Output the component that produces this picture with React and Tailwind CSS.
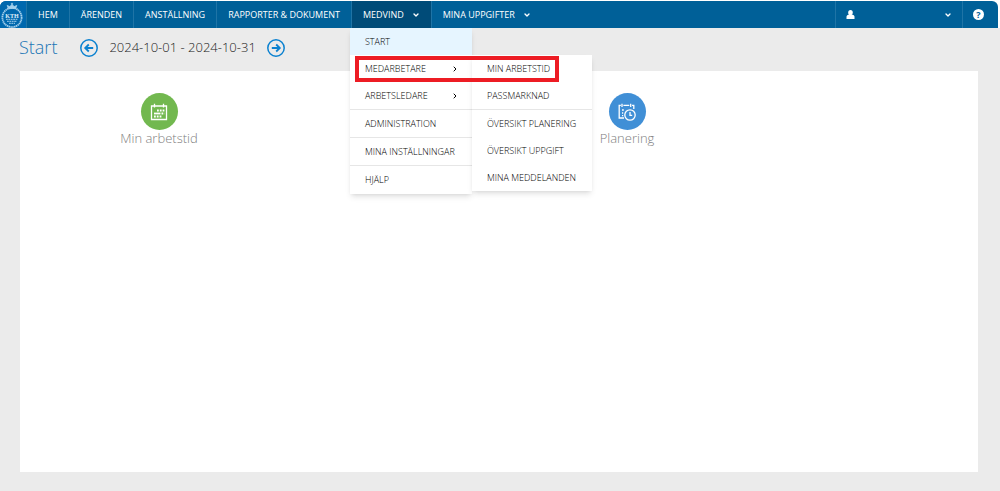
import React from 'react';
import { ChevronDown, ChevronRight } from 'lucide-react';

const NAV = [
  { label: 'HEM' },
  { label: 'ÄRENDEN' },
  { label: 'ANSTÄLLNING' },
  { label: 'RAPPORTER & DOKUMENT' },
  { label: 'MEDVIND', active: true },
  { label: 'MINA UPPGIFTER', arrow: true },
];

const SUBMENU = ['MIN ARBETSTID', 'PASSMARKNAD', 'ÖVERSIKT PLANERING', 'ÖVERSIKT UPPGIFT', 'MINA MEDDELANDEN'];

function Logo() {
  return (
    <svg viewBox="0 0 24 26" className="h-[26px] w-6" fill="none" stroke="#a5d0ec">
      <circle cx="12" cy="15.5" r="9.6" strokeWidth="1.8" strokeDasharray="1.4 0.5" />
      <path d="M8.3 6.5 L7.2 3.4 L9.8 4.6 L12 2.4 L14.2 4.6 L16.8 3.4 L15.7 6.5 Z" fill="#a5d0ec" strokeWidth="0.8" />
      <path d="M12 0.8 V3 M10.9 1.8 H13.1" strokeWidth="0.8" />
      <path d="M6 17.3 H18 M7 19.3 H17 M9 21.3 H15" strokeWidth="1" strokeDasharray="1.8 0.6" />
      <text x="12" y="15.5" textAnchor="middle" fontSize="6" fontWeight="700" stroke="none" fill="#e0f0fa" fontFamily="Liberation Serif, serif">KTH</text>
    </svg>
  );
}

function CircleArrow({ label, flip }) {
  return (
    <button type="button" aria-label={label} className="shrink-0">
      <svg viewBox="0 0 18 18" className={flip ? 'size-[18px] rotate-180' : 'size-[18px]'} fill="none" stroke="#0c82d0" strokeWidth="1.5">
        <circle cx="9" cy="9" r="8.2" />
        <path d="M13.2 9 H5.5 M8.8 5.5 L5.2 9 L8.8 12.5" strokeWidth="1.8" />
      </svg>
    </button>
  );
}

function UserIcon() {
  return (
    <svg viewBox="0 0 9 9" className="size-[9px]" fill="currentColor">
      <ellipse cx="4.5" cy="2.7" rx="2.3" ry="2.6" />
      <path d="M0.5 9 V6.8 C0.5 5.5 1.6 4.8 2.8 4.8 H6.2 C7.4 4.8 8.5 5.5 8.5 6.8 V9 Z" />
    </svg>
  );
}

function CalendarIcon() {
  return (
    <svg viewBox="0 0 18 18" className="size-[18px]" fill="none" stroke="white">
      <path d="M1.5 3 H16.5 V16.5 H1.5 Z" strokeWidth="1.3" />
      <path d="M4.5 0.8 V4.6 M13.5 0.8 V4.6" strokeWidth="1.3" />
      <path d="M7 7.5 H14.5 M11.5 10.5 H14.5 M4 13.5 H11.5" strokeWidth="1.8" strokeDasharray="1.8 1" />
      <path d="M4 10.5 H10.5" strokeWidth="1.8" />
    </svg>
  );
}

function CalendarClockIcon() {
  return (
    <svg viewBox="0 0 18 18" className="size-[18px]" fill="none" stroke="white" strokeWidth="1.3">
      <path d="M6 15 H1.2 V2.3 H2.8 M5.4 2.3 H11.3 M14 2.3 H15.8 V6" />
      <path d="M4 0.8 V4 M12.7 0.8 V4" />
      <path d="M4 7 H5.8 M4 10 H5.2 M4 12.7 H5.2" />
      <circle cx="12" cy="12" r="5.2" />
      <path d="M12 9 V12.3 H14.2" />
    </svg>
  );
}

function MenuItem({ label, arrow, className = '' }) {
  return (
    <li className={className}>
      <a href="#" className="flex h-full items-center justify-between pr-[13px] pl-[15px] whitespace-nowrap">
        {label}
        {arrow && <ChevronRight className="size-2" strokeWidth={3} />}
      </a>
    </li>
  );
}

function MedvindMenu() {
  return (
    <div className="absolute top-full -left-0.5 z-10 text-[9px] font-light text-black">
      <ul className="w-[122px] bg-white shadow-md">
        <MenuItem label="START" className="h-[27px] bg-[#e6f5ff]" />
        <MenuItem label="MEDARBETARE" arrow className="h-[27px]" />
        <MenuItem label="ARBETSLEDARE" arrow className="h-7 border-b border-[#e6e6e6]" />
        <MenuItem label="ADMINISTRATION" className="h-7 border-b border-[#e6e6e6]" />
        <MenuItem label="MINA INSTÄLLNINGAR" className="h-7 border-b border-[#e6e6e6]" />
        <MenuItem label="HJÄLP" className="h-7" />
      </ul>
      <ul className="absolute top-[27px] left-full w-[120px] bg-white shadow-md">
        {SUBMENU.map((label) => (
          <MenuItem
            key={label}
            label={label}
            className={label === 'PASSMARKNAD' ? 'h-7 border-b border-[#e6e6e6]' : 'h-[27px]'}
          />
        ))}
      </ul>
      <div className="pointer-events-none absolute top-7 left-[5px] h-[26px] w-[204px] border-4 border-[#ed1c24]" />
    </div>
  );
}

function Tile({ label, color, className = '', children }) {
  return (
    <a href="#" className={`flex flex-col items-center ${className}`}>
      <span className={`flex size-[37px] items-center justify-center rounded-full ${color}`}>{children}</span>
      <span className="text-[13px] leading-4 font-light text-[#808080]">{label}</span>
    </a>
  );
}

export default function App() {
  return (
    <div className="flex min-h-screen flex-col bg-[#ebebeb] font-['Open_Sans',sans-serif]">
      <div className="bg-white pt-px pr-0.5">
        <nav className="flex h-[27px] rounded-t-md bg-[#006098] text-[9px] text-white">
          <a href="#" aria-label="KTH" className="flex w-[26px] shrink-0 items-center rounded-tl-md bg-[#0068ae]">
            <Logo />
          </a>
          <ul className="flex flex-1">
            {NAV.map((item) => (
              <li key={item.label} className={`relative border-l border-[#1f74a6] ${item.active ? 'bg-[#004b78]' : ''}`}>
                <a href="#" className="flex h-full items-center gap-2 px-[11px] whitespace-nowrap">
                  {item.label}
                  {(item.active || item.arrow) && <ChevronDown className="size-2" strokeWidth={4} />}
                </a>
                {item.active && <MedvindMenu />}
              </li>
            ))}
          </ul>
          <button type="button" aria-label="Användare" className="flex w-[127px] items-center justify-between border-l border-[#1f74a6] px-[10px]">
            <UserIcon />
            <ChevronDown className="size-2" strokeWidth={4} />
          </button>
          <button type="button" aria-label="Hjälp" className="flex w-9 items-center border-l border-[#1f74a6] pl-[10px]">
            <span className="flex size-[11px] items-center justify-center rounded-full bg-white text-[9px] font-bold text-[#006098]">?</span>
          </button>
        </nav>
      </div>

      <header className="flex h-[43px] items-center pb-1 pl-[19px]">
        <h1 className="text-[18px] font-light text-[#1975b5]">Start</h1>
        <div className="ml-[23px] flex items-center gap-[11px]">
          <CircleArrow label="Föregående period" />
          <span className="text-[13px] font-light text-[#222]">2024-10-01 - 2024-10-31</span>
          <CircleArrow label="Nästa period" flip />
        </div>
      </header>

      <main className="mr-[22px] mb-[19px] ml-5 grid flex-1 grid-cols-4 items-start bg-white pt-[22px] pl-[22px]">
        <Tile label="Min arbetstid" color="bg-[#72b84f]">
          <CalendarIcon />
        </Tile>
        <Tile label="Planering" color="bg-[#408fd6]" className="col-start-3">
          <CalendarClockIcon />
        </Tile>
      </main>
    </div>
  );
}
